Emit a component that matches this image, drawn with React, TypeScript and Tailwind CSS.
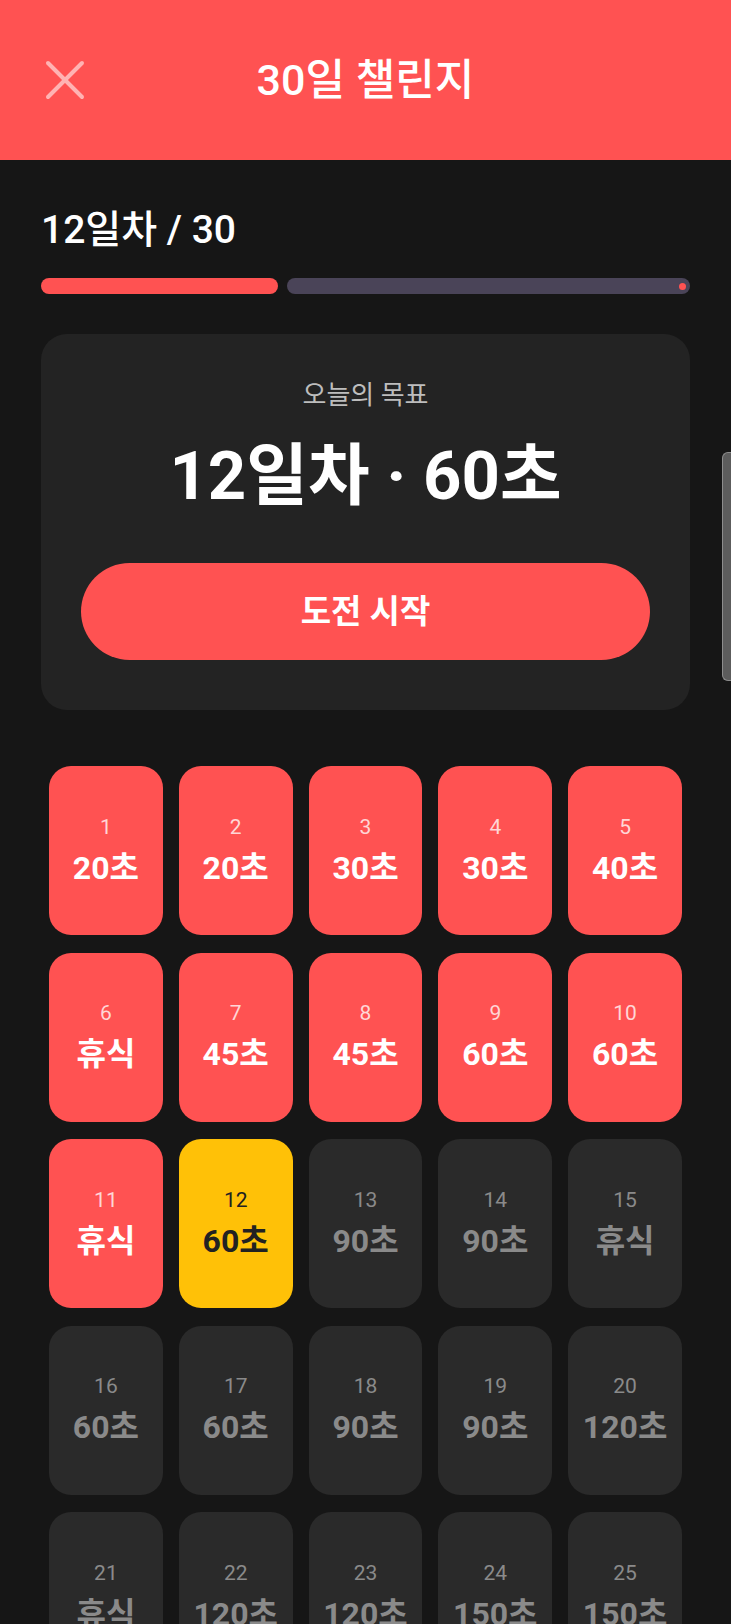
import React from 'react';

type Day = { day: number; value: string };

const DAYS: Day[] = [
  { day: 1, value: '20초' },
  { day: 2, value: '20초' },
  { day: 3, value: '30초' },
  { day: 4, value: '30초' },
  { day: 5, value: '40초' },
  { day: 6, value: '휴식' },
  { day: 7, value: '45초' },
  { day: 8, value: '45초' },
  { day: 9, value: '60초' },
  { day: 10, value: '60초' },
  { day: 11, value: '휴식' },
  { day: 12, value: '60초' },
  { day: 13, value: '90초' },
  { day: 14, value: '90초' },
  { day: 15, value: '휴식' },
  { day: 16, value: '60초' },
  { day: 17, value: '60초' },
  { day: 18, value: '90초' },
  { day: 19, value: '90초' },
  { day: 20, value: '120초' },
  { day: 21, value: '휴식' },
  { day: 22, value: '120초' },
  { day: 23, value: '120초' },
  { day: 24, value: '150초' },
  { day: 25, value: '150초' },
  { day: 26, value: '휴식' },
  { day: 27, value: '180초' },
  { day: 28, value: '180초' },
  { day: 29, value: '210초' },
  { day: 30, value: '240초' },
];

const CURRENT_DAY = 12;

function DayTile({ day, value }: Day) {
  const done = day < CURRENT_DAY;
  const today = day === CURRENT_DAY;

  let tileClass = 'bg-[#2a2a2a]';
  let numClass = 'text-[#8a8a8a]';
  let valueClass = 'text-[#8a8a8a]';
  if (done) {
    tileClass = 'bg-[#ff5252]';
    numClass = 'text-[#ffd6d6]';
    valueClass = 'text-white';
  } else if (today) {
    tileClass = 'bg-[#ffc107]';
    numClass = 'text-[#222222]';
    valueClass = 'text-[#222222]';
  }

  return (
    <div className={`h-[169px] rounded-[22px] flex flex-col items-center justify-center ${tileClass}`}>
      <div className={`text-[21px] leading-[24px] ${numClass}`}>{day}</div>
      <div className={`mt-[10px] text-[32px] leading-[38px] font-bold ${valueClass}`}>{value}</div>
    </div>
  );
}

export default function App() {
  return (
    <div
      className="relative h-[1624px] overflow-hidden bg-[#161616] text-white"
      style={{ fontFamily: 'Roboto, "Noto Sans CJK KR", sans-serif' }}
    >
      {/* app bar */}
      <header className="h-[160px] bg-[#ff5252] flex items-center px-[45px]">
        <button className="w-[40px] h-[40px] flex items-center justify-center">
          <svg width="40" height="40" viewBox="0 0 40 40" fill="none" stroke="#ffb3b3" strokeWidth="4" strokeLinecap="round">
            <line x1="3" y1="3" x2="37" y2="37" />
            <line x1="37" y1="3" x2="3" y2="37" />
          </svg>
        </button>
        <h1 className="flex-1 text-center text-[43px] leading-[50px] font-medium">30일 챌린지</h1>
        <div className="w-[40px]" />
      </header>

      <main className="px-[41px]">
        <div className="pt-[47px] text-[39px] leading-[46px] font-medium">12일차 / 30</div>

        {/* progress */}
        <div className="mt-[25px] flex items-center gap-[9px] h-[16px]">
          <div className="w-[237px] h-[16px] rounded-full bg-[#ff5252]" />
          <div className="relative flex-1 h-[16px] rounded-full bg-[#4a4458]">
            <span className="absolute right-[4px] top-[4.5px] w-[7px] h-[7px] rounded-full bg-[#ff5252]" />
          </div>
        </div>

        {/* today card */}
        <section className="mt-[40px] rounded-[26px] bg-[#232323] px-[40px] pt-[44px] pb-[50px] flex flex-col items-center">
          <div className="text-[26px] leading-[34px] text-[#bdbdbd]">오늘의 목표</div>
          <div className="mt-[24px] text-[67px] leading-[80px] font-bold">12일차 · 60초</div>
          <button className="mt-[47px] w-full h-[97px] rounded-full bg-[#ff5252] text-[33px] font-bold">
            도전 시작
          </button>
        </section>

        {/* day grid */}
        <div className="mt-[56px] px-[8px] grid grid-cols-5 gap-x-[16px] gap-y-[17.5px]">
          {DAYS.map((d) => (
            <DayTile key={d.day} {...d} />
          ))}
        </div>
      </main>

      {/* scroll thumb */}
      <div className="absolute right-0 top-[452px] w-[9px] h-[229px] rounded-l-[6px] bg-[#5c5c5c] border border-r-0 border-[#8c8c8c]" />
    </div>
  );
}
